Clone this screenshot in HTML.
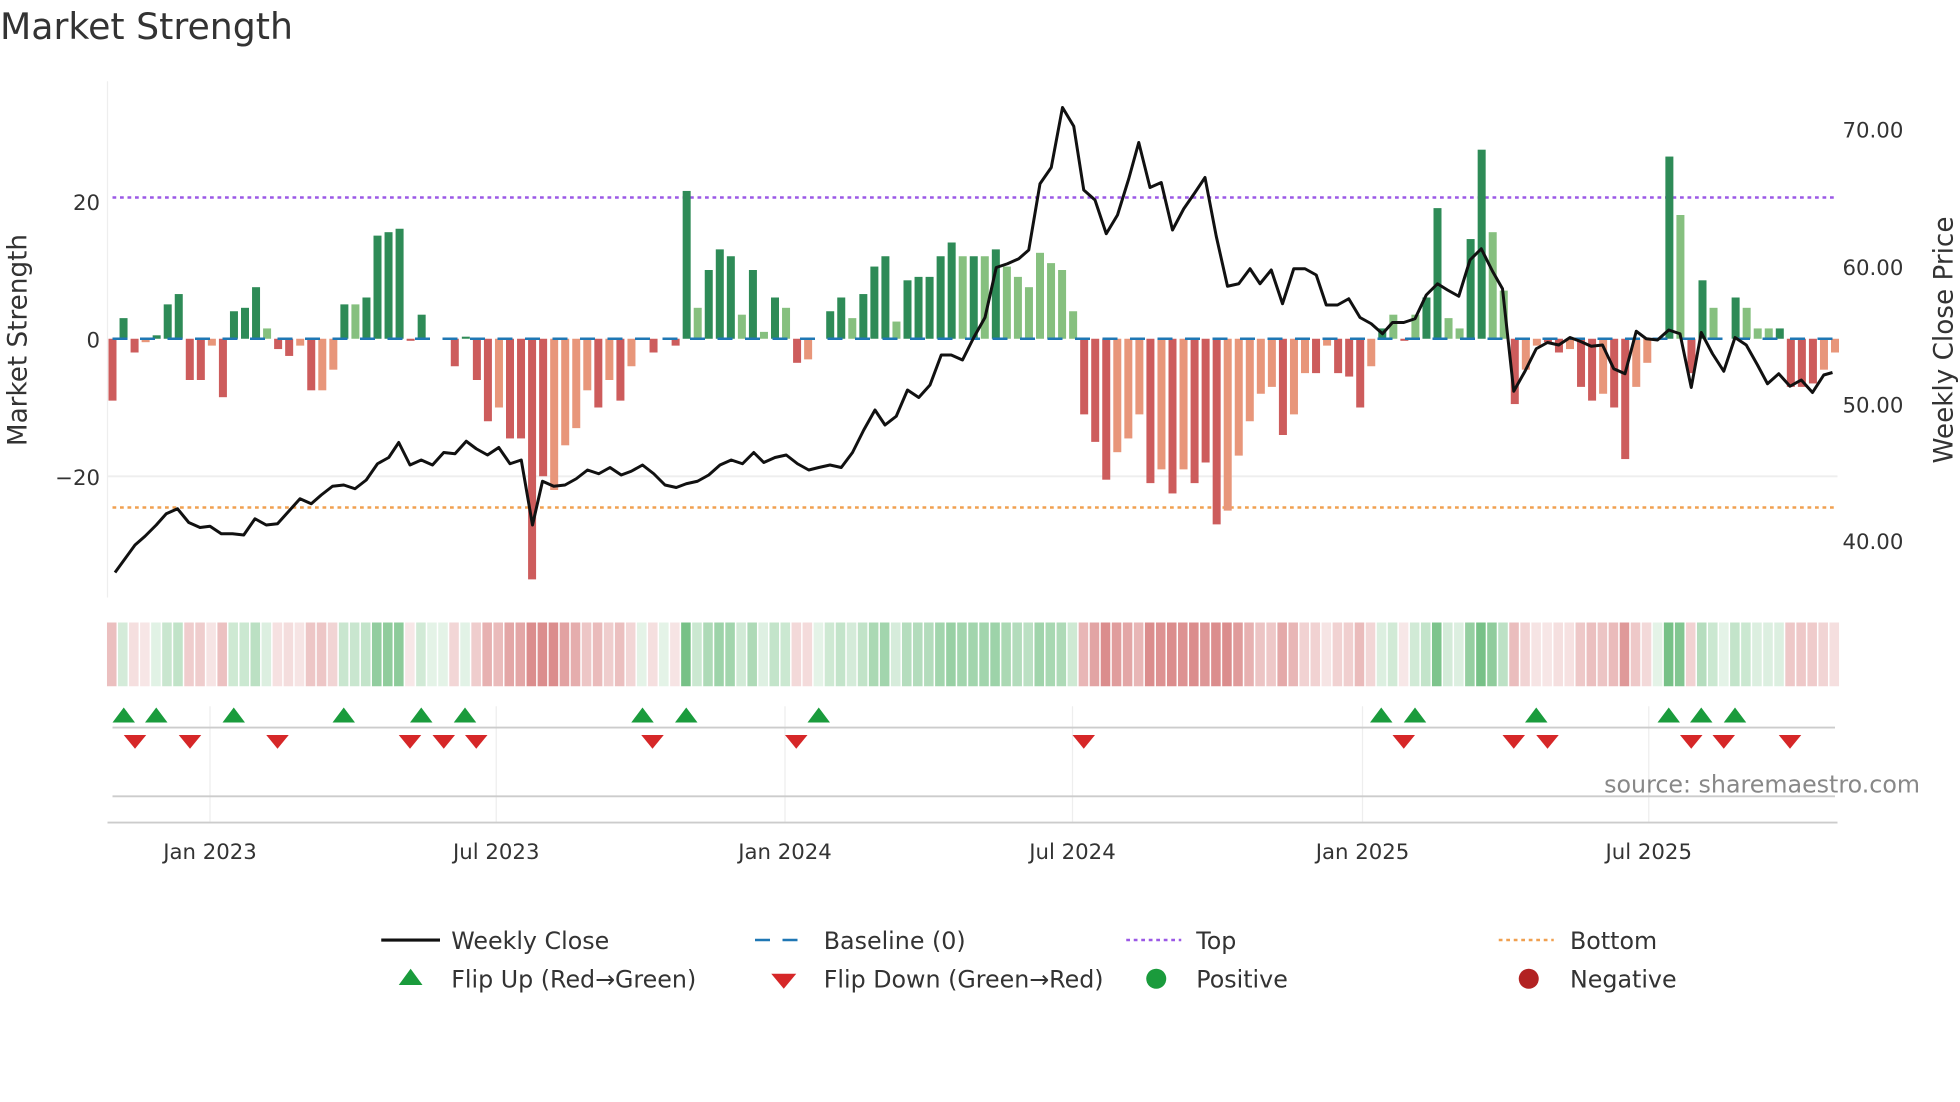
<!DOCTYPE html>
<html><head><meta charset="utf-8"><style>
html,body{margin:0;padding:0;background:#fff;}
svg{display:block;font-family:"DejaVu Sans","Liberation Sans",sans-serif;}
</style></head><body>
<svg id="s" width="1960" height="1102" viewBox="0 0 1568 881.6" xmlns="http://www.w3.org/2000/svg">
<rect width="1568" height="882" fill="#fff"/>
<text x="0" y="31" font-size="29" fill="#333">Market Strength</text>
<line x1="86" y1="65" x2="86" y2="478" stroke="#eee" stroke-width="1"/>
<line x1="86" y1="381" x2="1470" y2="381" stroke="#eee" stroke-width="1.5"/>
<g font-size="17" fill="#333">
<text x="80" y="168" text-anchor="end">20</text>
<text x="80" y="278" text-anchor="end">0</text>
<text x="80" y="388" text-anchor="end">−20</text>
<text x="1474" y="110">70.00</text>
<text x="1474" y="220">60.00</text>
<text x="1474" y="330">50.00</text>
<text x="1474" y="439">40.00</text>
</g>
<text transform="translate(21,272) rotate(-90)" font-size="21" fill="#333" text-anchor="middle">Market Strength</text>
<text transform="translate(1562,272) rotate(-90)" font-size="21" fill="#333" text-anchor="middle">Weekly Close Price</text>
<line x1="90" y1="158" x2="1470" y2="158" stroke="#9b59e6" stroke-width="2" stroke-dasharray="3,3"/>
<line x1="90" y1="406" x2="1470" y2="406" stroke="#f0a050" stroke-width="2" stroke-dasharray="3,3"/>
<g id="bars"></g>
<line x1="90" y1="271" x2="1470" y2="271" stroke="#1f77b4" stroke-width="2" stroke-dasharray="12,10"/>
<polyline id="price" fill="none" stroke="#111" stroke-width="2.4" stroke-linejoin="round"/>
<g id="strip"></g>
<g stroke="#eee" stroke-width="1">
<line x1="168" y1="565" x2="168" y2="658"/><line x1="397" y1="565" x2="397" y2="658"/>
<line x1="628" y1="565" x2="628" y2="658"/><line x1="858" y1="565" x2="858" y2="658"/>
<line x1="1090" y1="565" x2="1090" y2="658"/><line x1="1319" y1="565" x2="1319" y2="658"/>
</g>
<line x1="90" y1="582" x2="1468" y2="582" stroke="#ccc" stroke-width="1.5"/>
<line x1="90" y1="637" x2="1468" y2="637" stroke="#ccc" stroke-width="1.5"/>
<line x1="86" y1="658" x2="1470" y2="658" stroke="#ccc" stroke-width="1.5"/>
<g id="marks"></g>
<text x="1536" y="634" font-size="19" fill="#888" text-anchor="end">source: sharemaestro.com</text>
<g font-size="17" fill="#333" text-anchor="middle">
<text x="168" y="687">Jan 2023</text><text x="397" y="687">Jul 2023</text>
<text x="628" y="687">Jan 2024</text><text x="858" y="687">Jul 2024</text>
<text x="1090" y="687">Jan 2025</text><text x="1319" y="687">Jul 2025</text>
</g>
<line x1="305" y1="752" x2="352" y2="752" stroke="#111" stroke-width="2.5"/>
<line x1="604" y1="752" x2="648" y2="752" stroke="#1f77b4" stroke-width="2" stroke-dasharray="12,10"/>
<line x1="901" y1="752" x2="945" y2="752" stroke="#9b59e6" stroke-width="2" stroke-dasharray="3,3"/>
<line x1="1199" y1="752" x2="1243" y2="752" stroke="#f0a050" stroke-width="2" stroke-dasharray="3,3"/>
<polygon points="319,788 338,788 328.5,775" fill="#1a9b3c"/>
<polygon points="617,779 637,779 627,791" fill="#d62728"/>
<circle cx="925" cy="783" r="8" fill="#1a9b3c"/>
<circle cx="1223" cy="783" r="8" fill="#b22222"/>
<g font-size="19" fill="#333">
<text x="361" y="759">Weekly Close</text><text x="659" y="759">Baseline (0)</text>
<text x="957" y="759">Top</text><text x="1256" y="759">Bottom</text>
<text x="361" y="790">Flip Up (Red→Green)</text><text x="659" y="790">Flip Down (Green→Red)</text>
<text x="957" y="790">Positive</text><text x="1256" y="790">Negative</text>
</g>
</svg>
<script>
var d=[[-9,0],[3,0],[-2,0],[-0.5,1],[0.5,0],[5,0],[6.5,0],[-6,0],[-6,0],[-1,1],[-8.5,0],[4,0],[4.5,0],[7.5,0],[1.5,1],[-1.5,0],[-2.5,0],[-1,1],[-7.5,0],[-7.5,1],[-4.5,1],[5,0],[5,1],[6,0],[15,0],[15.5,0],[16,0],[-0.3,0],[3.5,0],[0,0],[0,0],[-4,0],[0.3,0],[-6,0],[-12,0],[-10,1],[-14.5,0],[-14.5,0],[-35,0],[-20,0],[-22,1],[-15.5,1],[-13,1],[-7.5,1],[-10,0],[-6,1],[-9,0],[-4,1],[0,0],[-2,0],[0,0],[-1,0],[21.5,0],[4.5,1],[10,0],[13,0],[12,0],[3.5,1],[10,0],[1,1],[6,0],[4.5,1],[-3.5,0],[-3,1],[0,0],[4,0],[6,0],[3,1],[6.5,0],[10.5,0],[12,0],[2.5,1],[8.5,0],[9,0],[9,0],[12,0],[14,0],[12,1],[12,0],[12,1],[13,0],[10.5,1],[9,1],[7.5,1],[12.5,1],[11,1],[10,1],[4,1],[-11,0],[-15,0],[-20.5,0],[-16.5,1],[-14.5,1],[-11,1],[-21,0],[-19,1],[-22.5,0],[-19,1],[-21,0],[-18,0],[-27,0],[-25,1],[-17,1],[-12,1],[-8,1],[-7,1],[-14,0],[-11,1],[-5,1],[-5,0],[-1,1],[-5,0],[-5.5,0],[-10,0],[-4,1],[1.5,0],[3.5,1],[-0.3,0],[3.5,1],[6,0],[19,0],[3,1],[1.5,1],[14.5,0],[27.5,0],[15.5,1],[7,1],[-9.5,0],[-4.5,1],[-1,1],[-0.5,0],[-2,0],[-1.5,1],[-7,0],[-9,0],[-8,1],[-10,0],[-17.5,0],[-7,1],[-3.5,1],[0,0],[26.5,0],[18,1],[-5,0],[8.5,0],[4.5,1],[0,0],[6,0],[4.5,1],[1.5,1],[1.5,1],[1.5,0],[-7,0],[-7,0],[-6.5,0],[-4.5,1],[-2,1]];
var step=(1468-90)/(d.length-1),b="",st="";
d.forEach(function(v,i){var x=90+i*step,h=v[0]*5.5,y=h>0?271-h:271;var c=v[0]>=0?(v[1]?"#86c07f":"#2e8b57"):(v[1]?"#e8967a":"#cd5c5c");
if(Math.abs(h)>0.3)b+='<rect x="'+(x-3.2)+'" y="'+y+'" width="6.4" height="'+Math.abs(h)+'" fill="'+c+'"/>';
var a=Math.min(1,0.2+Math.abs(v[0])/25);var sc=v[0]>=0?"46,160,70":"200,80,80";
st+='<rect x="'+(x-step/2)+'" y="498" width="'+(step-1.2)+'" height="51" fill="rgba('+sc+','+(a*0.65)+')"/>';});
document.getElementById("bars").innerHTML=b;document.getElementById("strip").innerHTML=st;
document.getElementById("price").setAttribute("points","92,458 100,447 108,436 116,429 125,420 133,411 142,407 151,418 160,422 168,421 177,427 186,427 195,428 204,415 213,420 222,419 231,409 240,399 249,403 257,396 266,389 275,388 284,391 293,384 302,371 311,366 319,354 328,372 337,368 346,372 355,362 364,363 373,353 381,359 390,364 399,358 408,371 417,368 426,420 434,385 443,389 452,388 461,383 470,376 479,379 488,374 497,380 505,377 514,372 523,379 532,388 541,390 549,387 558,385 567,380 576,372 585,368 594,371 603,362 611,370 620,366 629,364 638,371 647,376 655,374 664,372 673,374 682,362 691,344 700,328 708,340 717,333 726,312 735,318 744,308 753,284 761,284 770,288 779,270 788,254 797,214 806,211 815,207 823,200 832,147 841,134 850,86 859,101 867,152 876,160 885,187 894,172 903,143 911,114 920,150 929,146 938,184 947,167 956,154 964,142 973,189 982,229 991,227 1000,215 1008,227 1017,216 1026,243 1035,215 1044,215 1053,220 1061,244 1070,244 1079,239 1088,254 1097,259 1106,267 1114,258 1123,258 1132,255 1141,236 1150,227 1158,232 1167,237 1176,208 1185,199 1194,217 1202,231 1211,313 1220,297 1229,279 1238,274 1247,276 1256,270 1264,273 1273,277 1282,276 1291,295 1300,299 1309,265 1317,271 1326,272 1335,264 1344,267 1353,310 1361,266 1370,283 1379,297 1388,270 1397,276 1406,292 1414,307 1423,299 1432,309 1441,304 1450,314 1459,300 1466,298");
var up=[99,125,187,275,337,372,514,549,655,1105,1132,1229,1335,1361,1388],dn=[108,152,222,328,355,381,522,637,867,1123,1211,1238,1353,1379,1432],m="";
up.forEach(function(x){m+='<polygon points="'+(x-9)+',578 '+(x+9)+',578 '+x+',566" fill="#1a9b3c"/>';});
dn.forEach(function(x){m+='<polygon points="'+(x-9)+',588 '+(x+9)+',588 '+x+',599" fill="#d62728"/>';});
document.getElementById("marks").innerHTML=m;
</script>
</body></html>
